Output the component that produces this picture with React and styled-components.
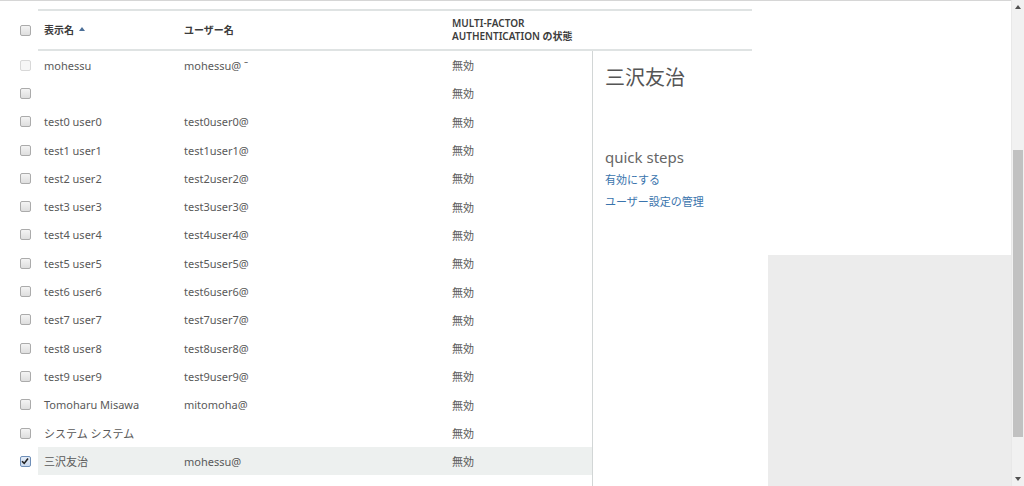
import React from 'react';
import styled, { createGlobalStyle } from 'styled-components';

const GlobalStyle = createGlobalStyle`
    html, body {
        margin: 0;
        padding: 0;
        background: #ffffff;
        overflow: hidden;
    }
    body {
        font-family: "Noto Sans", "Open Sans", "Noto Sans CJK JP", sans-serif;
    }
`;

const Page = styled.div`
    display: flex;
    width: 1024px;
    height: 486px;
    overflow: hidden;
`;

const Content = styled.div`
    flex: 1;
    display: flex;
    border-top: 1px solid #d6d6d6;
    box-sizing: border-box;
`;

const CheckCol = styled.div`
    width: 38px;
    padding-left: 12px;
    box-sizing: border-box;
    padding-top: 8px;
`;

const CheckCell = styled.div`
    height: ${(p) => p.h}px;
    display: flex;
    align-items: center;
    justify-content: center;
    width: 26px;
`;

const Box = styled.span`
    width: 9px;
    height: 9px;
    border: 1px solid ${(p) => (p.checked ? '#6f8fb8' : p.faded ? '#d8d8d8' : '#ababab')};
    border-radius: 2px;
    background: ${(p) =>
        p.checked
            ? 'linear-gradient(#e4ecf7, #cad9ee)'
            : p.faded
            ? '#f6f6f6'
            : 'linear-gradient(#f4f4f4, #dedede)'};
    display: flex;
    align-items: center;
    justify-content: center;
`;

const Table = styled.div`
    width: 714px;
    display: flex;
    flex-direction: column;
    margin-top: 8px;
`;

const Header = styled.div`
    height: 42px;
    box-sizing: border-box;
    border-top: 2px solid #dfe3e3;
    border-bottom: 2px solid #dfe3e3;
    display: flex;
    align-items: center;
    font-size: 10px;
    font-weight: 600;
    color: #3c3c3c;
    line-height: 13px;
`;

const HeadCell = styled.div`
    width: ${(p) => p.w}px;
    padding-left: 6px;
    box-sizing: border-box;
    display: flex;
    align-items: center;
    gap: 5px;
`;

const SortArrow = styled.span`
    width: 0;
    height: 0;
    border-left: 3px solid transparent;
    border-right: 3px solid transparent;
    border-bottom: 4px solid #4b6f98;
    margin-top: -2px;
`;

const Body = styled.div`
    flex: 1;
    display: flex;
`;

const List = styled.div`
    width: 554px;
`;

const Row = styled.div`
    height: 28.3px;
    display: flex;
    align-items: center;
    font-size: 11px;
    color: #595959;
    background: ${(p) => (p.selected ? '#edf0ef' : 'transparent')};
`;

const Cell = styled.div`
    width: ${(p) => p.w}px;
    padding-left: 6px;
    box-sizing: border-box;
    white-space: nowrap;
`;

const Detail = styled.div`
    flex: 1;
    border-left: 1px solid #d2d6d6;
    padding: 11px 12px;
`;

const Title = styled.h2`
    margin: 0;
    font-size: 20px;
    font-weight: 400;
    color: #555;
`;

const Steps = styled.h3`
    margin: 56px 0 2px;
    font-size: 15px;
    font-weight: 400;
    color: #666;
`;

const StepLink = styled.a`
    display: block;
    font-size: 11px;
    color: #3a74ad;
    text-decoration: none;
    line-height: 22px;
`;

const Side = styled.div`
    flex: 1;
    display: flex;
    flex-direction: column;
    justify-content: flex-end;
`;

const Shade = styled.div`
    margin-left: 16px;
    height: 231px;
    background: #ececec;
`;

const Scrollbar = styled.div`
    width: 13px;
    background: #f1f1f1;
    position: relative;
    border-left: 1px solid #e8e8e8;
    box-sizing: border-box;
`;

const Thumb = styled.div`
    position: absolute;
    left: 1px;
    right: 1px;
    top: 150px;
    height: 287px;
    background: #c1c1c1;
`;

const Arrow = styled.span`
    position: absolute;
    left: 3px;
    width: 0;
    height: 0;
    border-left: 3px solid transparent;
    border-right: 3px solid transparent;
    ${(p) => (p.up ? 'top: 5px; border-bottom: 4px solid #505050;' : 'bottom: 5px; border-top: 4px solid #505050;')}
`;

const users = [
    { name: 'mohessu', user: 'mohessu@ ˉ', faded: true },
    { name: '', user: '' },
    { name: 'test0 user0', user: 'test0user0@' },
    { name: 'test1 user1', user: 'test1user1@' },
    { name: 'test2 user2', user: 'test2user2@' },
    { name: 'test3 user3', user: 'test3user3@' },
    { name: 'test4 user4', user: 'test4user4@' },
    { name: 'test5 user5', user: 'test5user5@' },
    { name: 'test6 user6', user: 'test6user6@' },
    { name: 'test7 user7', user: 'test7user7@' },
    { name: 'test8 user8', user: 'test8user8@' },
    { name: 'test9 user9', user: 'test9user9@' },
    { name: 'Tomoharu Misawa', user: 'mitomoha@' },
    { name: 'システム システム', user: '' },
    { name: '三沢友治', user: 'mohessu@', selected: true },
];

const Check = () => (
    <svg width="8" height="8" viewBox="0 0 8 8">
        <path d="M1 4.2 L3.2 6.4 L7 1.4" stroke="#222" strokeWidth="1.6" fill="none" />
    </svg>
);

const App = () => {
    return (
        <>
            <GlobalStyle />
            <Page>
                <Content>
                    <CheckCol>
                        <CheckCell h={42}>
                            <Box />
                        </CheckCell>
                        {users.map((u, i) => (
                            <CheckCell key={i} h={28.3}>
                                <Box checked={u.selected} faded={u.faded}>
                                    {u.selected && <Check />}
                                </Box>
                            </CheckCell>
                        ))}
                    </CheckCol>
                    <Table>
                        <Header>
                            <HeadCell w={140}>
                                表示名 <SortArrow />
                            </HeadCell>
                            <HeadCell w={268}>ユーザー名</HeadCell>
                            <HeadCell w={146}>
                                MULTI-FACTOR
                                <br />
                                AUTHENTICATION の状態
                            </HeadCell>
                        </Header>
                        <Body>
                            <List>
                                {users.map((u, i) => (
                                    <Row key={i} selected={u.selected}>
                                        <Cell w={140}>{u.name}</Cell>
                                        <Cell w={268}>{u.user}</Cell>
                                        <Cell w={146}>無効</Cell>
                                    </Row>
                                ))}
                            </List>
                            <Detail>
                                <Title>三沢友治</Title>
                                <Steps>quick steps</Steps>
                                <StepLink href="#">有効にする</StepLink>
                                <StepLink href="#">ユーザー設定の管理</StepLink>
                            </Detail>
                        </Body>
                    </Table>
                    <Side>
                        <Shade />
                    </Side>
                </Content>
                <Scrollbar>
                    <Arrow up />
                    <Thumb />
                    <Arrow />
                </Scrollbar>
            </Page>
        </>
    );
};

export default App;
